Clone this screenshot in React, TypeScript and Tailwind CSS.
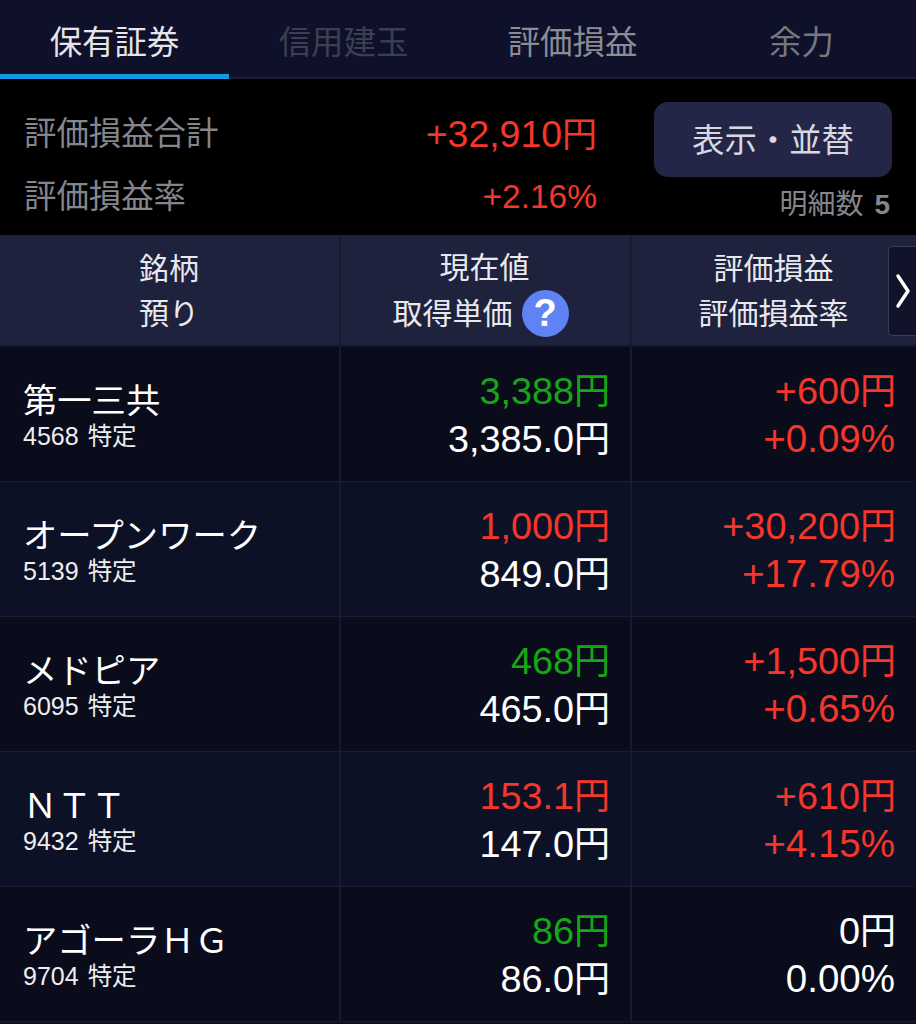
const font = { fontFamily: '"Liberation Sans", "Noto Sans CJK JP", sans-serif' };
const R = 'text-[#f5362a]';
const G = 'text-[#14a814]';
const W = 'text-white';
const rows = [
  { name: '第一三共', code: '4568', price: '3,388', pc: G, cost: '3,385.0', pl: '+600', rate: '+0.09%', lc: R },
  { name: 'オープンワーク', code: '5139', price: '1,000', pc: R, cost: '849.0', pl: '+30,200', rate: '+17.79%', lc: R },
  { name: 'メドピア', code: '6095', price: '468', pc: G, cost: '465.0', pl: '+1,500', rate: '+0.65%', lc: R },
  { name: 'ＮＴＴ', code: '9432', price: '153.1', pc: R, cost: '147.0', pl: '+610', rate: '+4.15%', lc: R },
  { name: 'アゴーラＨＧ', code: '9704', price: '86', pc: G, cost: '86.0', pl: '0', rate: '0.00%', lc: W },
];
const tabs = ['保有証券', '信用建玉', '評価損益', '余力'];
const tabColor = ['text-[#e6e6ea]', 'text-[#3c3f52]', 'text-[#8b8c96]', 'text-[#77787f]'];

function Yen({ v }: { v: string }) {
  return (
    <div className="flex items-baseline h-[48px] leading-[48px]">
      <span className="text-[37.8px]">{v}</span>
      <span className="text-[36px]">円</span>
    </div>
  );
}

export default function App() {
  return (
    <div style={font} className="w-[916px] h-[1024px] overflow-hidden bg-[#0b0e20] text-white">
      <div className="flex h-[79px] bg-[#0e1129] border-b-2 border-[#1a1d33]">
        {tabs.map((t, i) => (
          <div key={t} className={`relative flex-1 flex items-center justify-center pt-[9px] text-[32.4px] ${tabColor[i]}`}>
            {t}
            {i === 0 && <div className="absolute left-0 right-0 bottom-[-2px] h-[5px] bg-[#149ae5]" />}
          </div>
        ))}
      </div>
      <div className="flex h-[156px] bg-black pl-[24px] pr-[24px]">
        <div className="w-[573px] pt-[31px]">
          <div className="flex items-center justify-between h-[48px] text-[#85858c]">
            <span className="text-[32.4px]">評価損益合計</span>
            <span className="flex items-baseline text-[#f5362a]">
              <span className="text-[37.4px]">+32,910</span>
              <span className="text-[35px]">円</span>
            </span>
          </div>
          <div className="flex items-center justify-between h-[48px] mt-[15px] text-[#85858c]">
            <span className="text-[32.4px]">評価損益率</span>
            <span className="text-[33.5px] text-[#f5362a]">+2.16%</span>
          </div>
        </div>
        <div className="ml-[57px] w-[238px] pt-[23px]">
          <div className="h-[75px] pt-[3px] rounded-[14px] bg-[#232647] flex items-center justify-center text-[32.4px] text-[#d8d8e0]">表示・並替</div>
          <div className="mt-[7px] pr-[2px] flex justify-end items-center gap-[11px] text-[#85858c]">
            <span className="text-[28px] ml-[1px]">明細数</span>
            <span className="text-[28px] font-bold">5</span>
          </div>
        </div>
      </div>
      <div className="relative flex h-[112px] bg-[#1e223d] border-b-2 border-[#15182c] text-[30px] text-[#e8e8ee] leading-[45px]">
        <div className="w-[341px] pt-[1px] pr-[1px] flex flex-col items-center justify-center border-r-2 border-[#171a30]">
          <div>銘柄</div>
          <div>預り</div>
        </div>
        <div className="w-[291px] pt-[1px] pr-[2px] flex flex-col items-center justify-center border-r-2 border-[#171a30]">
          <div>現在値</div>
          <div className="flex items-center gap-[9px] mr-[8px]">
            取得単価
            <span className="w-[47px] h-[47px] rounded-full bg-[#5f82f5] flex items-center justify-center text-[38px] font-bold text-white">?</span>
          </div>
        </div>
        <div className="flex-1 pt-[1px] pr-[1px] flex flex-col items-center justify-center">
          <div>評価損益</div>
          <div>評価損益率</div>
        </div>
        <div className="absolute right-0 top-[11px] w-[28px] h-[90px] rounded-l-[5px] bg-[#10132a] border border-r-0 border-[#3b3e52] flex items-center justify-center">
          <svg width="16" height="36" viewBox="0 0 16 36" fill="none" stroke="#ffffff" strokeWidth="3.5" strokeLinecap="round" strokeLinejoin="round">
            <path d="M3 3 L13 18 L3 33" />
          </svg>
        </div>
      </div>
      {rows.map((r, i) => (
        <div key={r.code} className={`flex h-[135px] border-b border-[#191c33] ${i % 2 === 0 ? 'bg-[#0a0c1c]' : 'bg-[#0d1126]'}`}>
          <div className="w-[341px] pl-[23px] pt-[4px] flex flex-col justify-center border-r-2 border-[#171a30]">
            <div className="text-[34.3px] leading-[40px] text-white">{r.name}</div>
            <div className="flex items-baseline gap-[9px] text-[25px] leading-[30px] text-[#eeeeee]">
              <span>{r.code}</span>
              <span className="text-[24.5px]">特定</span>
            </div>
          </div>
          <div className="w-[291px] pr-[20px] pt-[2px] flex flex-col items-end justify-center border-r-2 border-[#171a30]">
            <div className={r.pc}><Yen v={r.price} /></div>
            <div className="text-white"><Yen v={r.cost} /></div>
          </div>
          <div className={`flex-1 pr-[20px] pt-[2px] flex flex-col items-end justify-center ${r.lc}`}>
            <Yen v={r.pl} />
            <div className="text-[38.5px] h-[48px] leading-[48px] mr-[1px]">{r.rate}</div>
          </div>
        </div>
      ))}
    </div>
  );
}
